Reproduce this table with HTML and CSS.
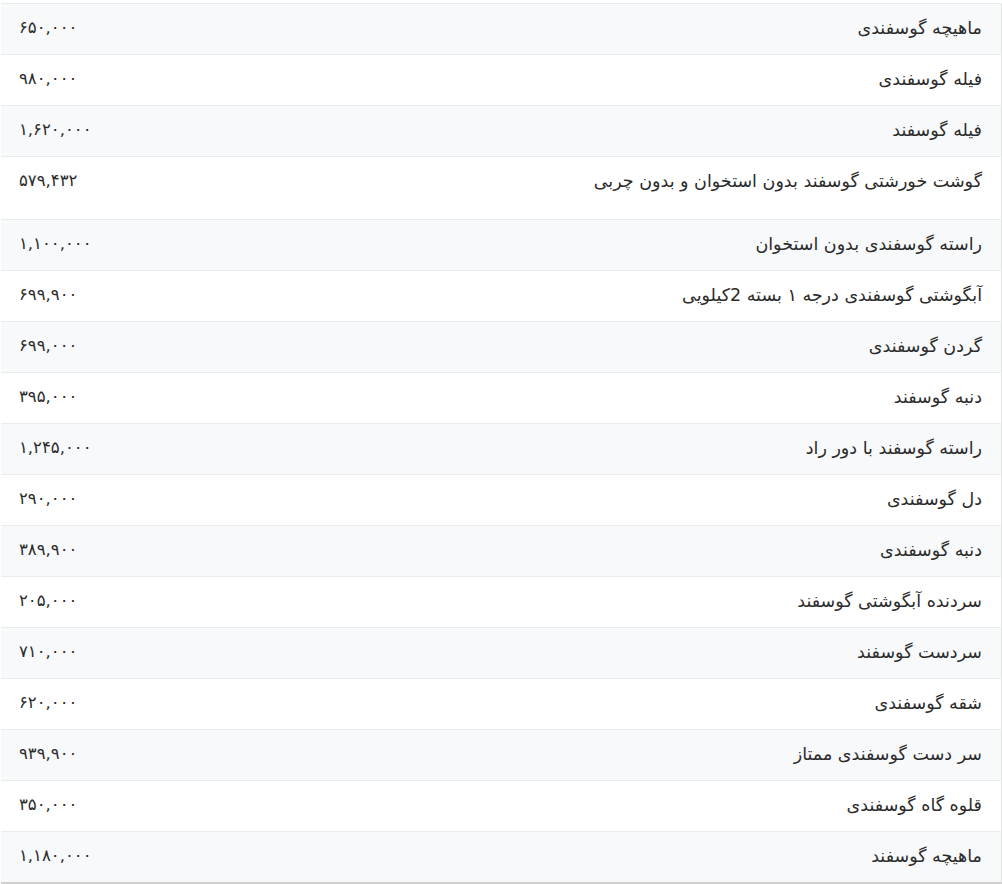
FILE: index.html
```html
<!DOCTYPE html>
<html lang="fa" dir="rtl">
<head>
<meta charset="utf-8">
<title>قیمت گوشت گوسفندی</title>
<link rel="stylesheet" href="styles.css">
</head>
<body>
<div class="wrap">
<table class="prices">
<tbody>
<tr><td class="name">ماهیچه گوسفندی</td><td class="price">۶۵۰,۰۰۰</td></tr>
<tr><td class="name">فیله گوسفندی</td><td class="price">۹۸۰,۰۰۰</td></tr>
<tr><td class="name">فیله گوسفند</td><td class="price">۱,۶۲۰,۰۰۰</td></tr>
<tr class="tall"><td class="name">گوشت خورشتی گوسفند بدون استخوان و بدون چربی</td><td class="price">۵۷۹,۴۳۲</td></tr>
<tr><td class="name">راسته گوسفندی بدون استخوان</td><td class="price">۱,۱۰۰,۰۰۰</td></tr>
<tr><td class="name">آبگوشتی گوسفندی درجه ۱ بسته 2کیلویی</td><td class="price">۶۹۹,۹۰۰</td></tr>
<tr><td class="name">گردن گوسفندی</td><td class="price">۶۹۹,۰۰۰</td></tr>
<tr><td class="name">دنبه گوسفند</td><td class="price">۳۹۵,۰۰۰</td></tr>
<tr><td class="name">راسته گوسفند با دور راد</td><td class="price">۱,۲۴۵,۰۰۰</td></tr>
<tr><td class="name">دل گوسفندی</td><td class="price">۲۹۰,۰۰۰</td></tr>
<tr><td class="name">دنبه گوسفندی</td><td class="price">۳۸۹,۹۰۰</td></tr>
<tr><td class="name">سردنده آبگوشتی گوسفند</td><td class="price">۲۰۵,۰۰۰</td></tr>
<tr><td class="name">سردست گوسفند</td><td class="price">۷۱۰,۰۰۰</td></tr>
<tr><td class="name">شقه گوسفندی</td><td class="price">۶۲۰,۰۰۰</td></tr>
<tr><td class="name">سر دست گوسفندی ممتاز</td><td class="price">۹۳۹,۹۰۰</td></tr>
<tr><td class="name">قلوه گاه گوسفندی</td><td class="price">۳۵۰,۰۰۰</td></tr>
<tr><td class="name">ماهیچه گوسفند</td><td class="price">۱,۱۸۰,۰۰۰</td></tr>
</tbody>
</table>
</div>
</body>
</html>
```
FILE: styles.css
```css
html, body {
  margin: 0;
  padding: 0;
  background: #ffffff;
}
body {
  font-family: "DejaVu Sans", sans-serif;
  color: #2b2b2b;
}
.wrap {
  padding-top: 3px;
  width: 1001px;
}
.prices {
  width: 100%;
  border-collapse: collapse;
  border-top: 1px solid #e9ecef;
  border-bottom: 2px solid #d0d0d0;
  border-right: 1px solid #e3e3e3;
}
.prices td {
  border-top: 1px solid #e9ecef;
  padding: 11px 19px 13px 18px;
  height: 26px;
  line-height: 26px;
  vertical-align: top;
}
.prices tr:first-child td {
  border-top: none;
}
.prices tr:nth-child(odd) td {
  background: #f8f9fa;
}
.prices tr.tall td {
  height: 38px;
}
.name {
  text-align: right;
  font-size: 17.5px;
}
.price {
  text-align: left;
  width: 250px;
  white-space: nowrap;
  font-size: 16.5px;
}
```
